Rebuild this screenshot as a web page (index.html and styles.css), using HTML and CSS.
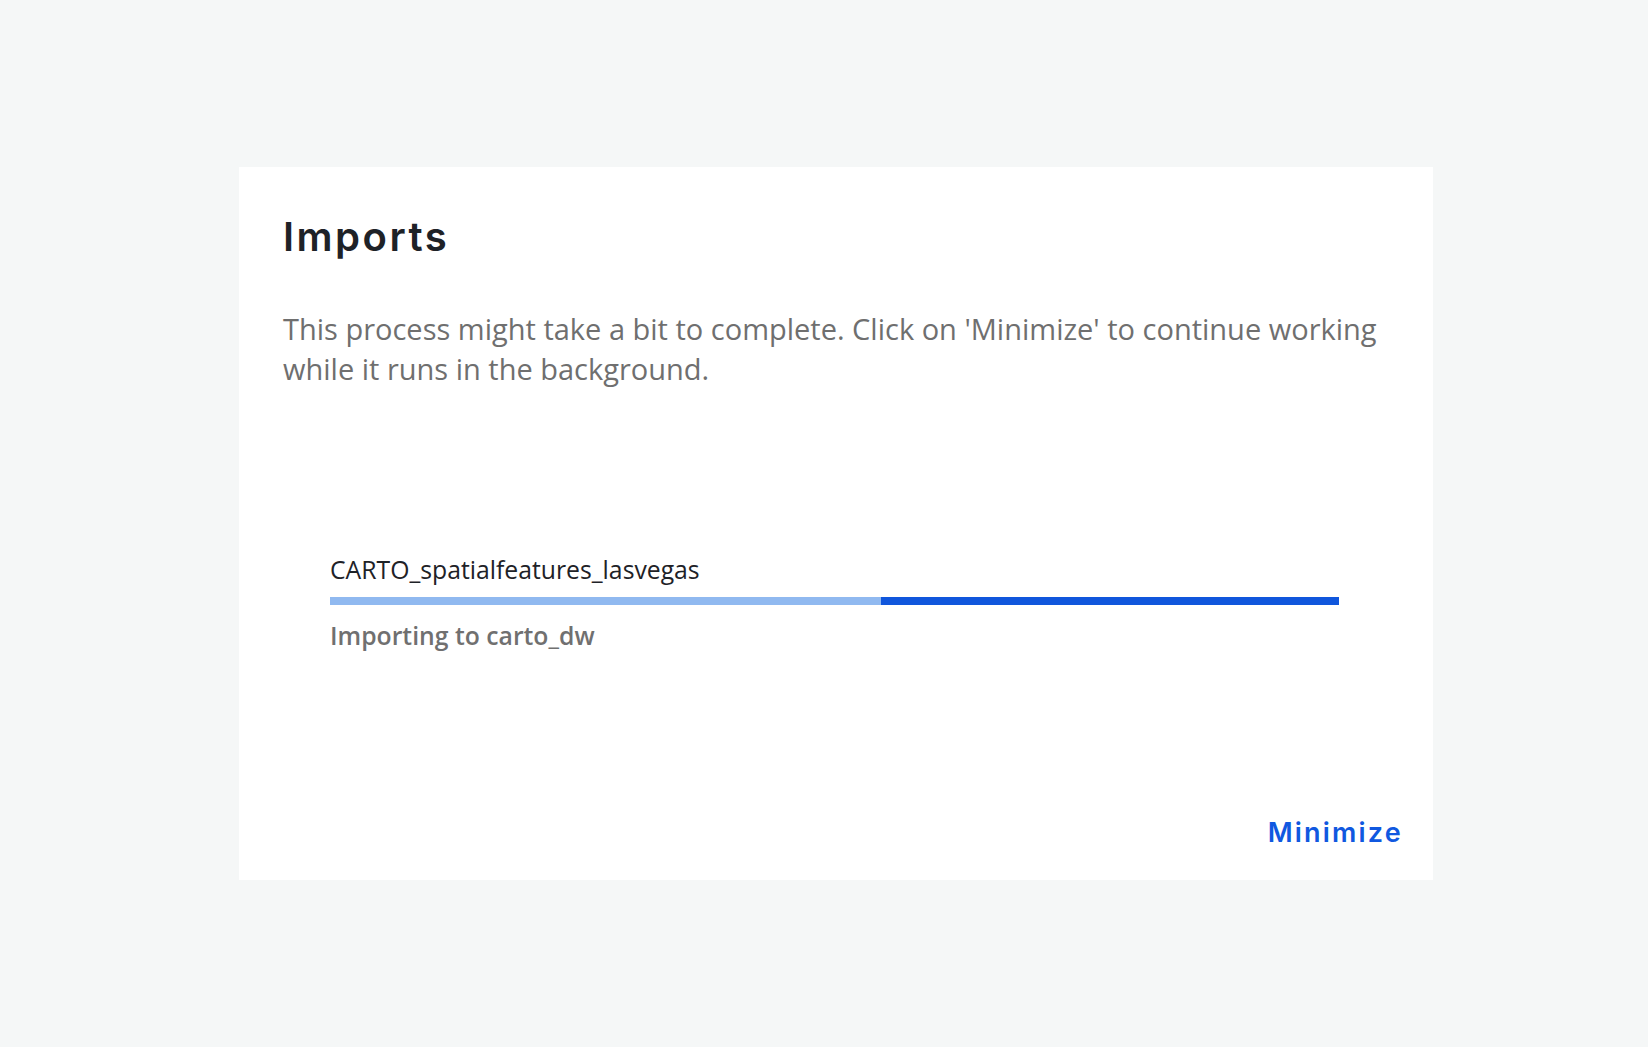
FILE: index.html
```html
<!DOCTYPE html>
<html lang="en">
<head>
<meta charset="utf-8">
<title>Imports</title>
<link rel="stylesheet" href="styles.css">
</head>
<body>
<div class="page">
  <section class="dialog">
    <h1 class="dialog-title">Imports</h1>
    <p class="dialog-text">This process might take a bit to complete. Click on 'Minimize' to continue working while it runs in the background.</p>
    <div class="import-item">
      <div class="import-name">CARTO_spatialfeatures_lasvegas</div>
      <div class="progress">
        <div class="progress-light"></div>
        <div class="progress-dark"></div>
      </div>
      <div class="import-status">Importing to carto_dw</div>
    </div>
    <div class="dialog-footer">
      <button class="btn-link" type="button">Minimize</button>
    </div>
  </section>
</div>
</body>
</html>
```

FILE: styles.css
```css
html, body {
  margin: 0;
  padding: 0;
  background: #f5f7f7;
}
.page {
  width: 1648px;
  height: 1047px;
  padding-top: 167px;
  padding-left: 239px;
  box-sizing: border-box;
}
.dialog {
  width: 1194px;
  height: 713px;
  background: #ffffff;
  box-sizing: border-box;
  padding: 46px 30px 29px 44px;
  display: flex;
  flex-direction: column;
}
.dialog-title {
  margin: 0;
  font-family: Inter, "Liberation Sans", sans-serif;
  font-weight: 600;
  font-size: 40px;
  line-height: 48px;
  color: #1e2227;
  letter-spacing: 2.5px;
}
.dialog-text {
  margin: 48px 0 0 0;
  font-family: "Open Sans", "Liberation Sans", sans-serif;
  font-size: 29px;
  line-height: 40px;
  color: #6f6f6f;
}
.import-item {
  margin: 164px 0 0 47px;
  width: 1009px;
}
.import-name {
  font-family: "Open Sans", "Liberation Sans", sans-serif;
  font-size: 24.75px;
  line-height: 34px;
  color: #1e2227;
}
.progress {
  margin-top: 10px;
  height: 8px;
  display: flex;
}
.progress-light {
  width: 551px;
  background: #90b9f0;
}
.progress-dark {
  flex: 1;
  background: #1056dc;
}
.import-status {
  margin-top: 14px;
  font-family: "Open Sans", "Liberation Sans", sans-serif;
  font-weight: 600;
  font-size: 24.75px;
  line-height: 34px;
  color: #707070;
}
.dialog-footer {
  margin-top: auto;
  display: flex;
  justify-content: flex-end;
}
.btn-link {
  border: 0;
  background: none;
  padding: 0;
  font-family: Inter, "Liberation Sans", sans-serif;
  font-weight: 600;
  font-size: 27px;
  line-height: 36px;
  color: #1058e0;
  letter-spacing: 2.2px;
  cursor: pointer;
}
```
